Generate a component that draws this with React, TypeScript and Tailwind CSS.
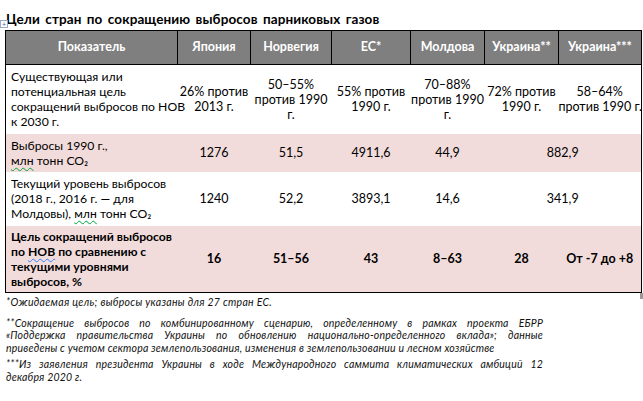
import React from "react";

const Wavy = ({ children, color = "decoration-green-600" }: { children: React.ReactNode; color?: string }) => (
  <span className={`underline decoration-wavy ${color} decoration-1 underline-offset-2`}>{children}</span>
);

const JLine = ({ children }: { children: React.ReactNode }) => (
  <div className="text-justify [text-align-last:justify] whitespace-nowrap">{children}</div>
);

export default function App() {
  const font = { fontFamily: "Lato, 'Open Sans', sans-serif" };
  const th = "border border-black bg-[#7f7f7f] text-white font-bold text-[12.5px] text-center align-middle";
  const td = "text-[12.5px] text-center align-middle leading-[15px]";
  const first = "text-[12.2px] leading-[15px] align-middle pl-[5px] whitespace-nowrap";
  return (
    <div className="w-[643px] h-[401px] bg-white relative text-black" style={font}>
      <div className="absolute left-0 top-[20px] w-[8px] h-[8px] border border-[#9aa9c4] bg-white text-[7px] leading-[6px] text-[#3c64b4] flex items-center justify-center">+</div>
      <div className="pl-[6px] pt-[9px] h-[30px] text-[13.5px] font-bold tracking-[0.1px] [word-spacing:2px]">
        Цели стран по сокращению выбросов парниковых газов
      </div>
      <table className="ml-[5px] border-collapse table-fixed w-[636px] border border-black">
        <colgroup>
          <col className="w-[172px]" />
          <col className="w-[73px]" />
          <col className="w-[81px]" />
          <col className="w-[79px]" />
          <col className="w-[74px]" />
          <col className="w-[74px]" />
          <col className="w-[83px]" />
        </colgroup>
        <thead>
          <tr className="h-[34px]">
            <th className={th}>Показатель</th>
            <th className={th}>Япония</th>
            <th className={th}>Норвегия</th>
            <th className={th}>ЕС*</th>
            <th className={th}>Молдова</th>
            <th className={th}>Украина**</th>
            <th className={th}>Украина***</th>
          </tr>
        </thead>
        <tbody>
          <tr className="h-[69px]">
            <td className={first}>
              Существующая или<br />потенциальная цель<br />сокращений выбросов по НОВ<br />к 2030 г.
            </td>
            <td className={td}>26% против<br />2013 г.</td>
            <td className={td}>50–55%<br />против 1990<br />г.</td>
            <td className={td}>55% против<br />1990 г.</td>
            <td className={td}>70–88%<br />против 1990<br />г.</td>
            <td className={td}>72% против<br />1990 г.</td>
            <td className={td}>58–64%<br /><span className="whitespace-nowrap">против 1990 г.</span></td>
          </tr>
          <tr className="h-[38px] bg-[#f2dcdb]">
            <td className={first}>
              Выбросы 1990 г.,<br /><Wavy>млн</Wavy> тонн CO₂
            </td>
            <td className={td}>1276</td>
            <td className={td}>51,5</td>
            <td className={td}>4911,6</td>
            <td className={td}>44,9</td>
            <td className={td} colSpan={2}>882,9</td>
          </tr>
          <tr className="h-[54px]">
            <td className={first}>
              Текущий уровень выбросов<br />(2018 г., 2016 г. — для<br />Молдовы), <Wavy>млн</Wavy> тонн CO₂
            </td>
            <td className={td}>1240</td>
            <td className={td}>52,2</td>
            <td className={td}>3893,1</td>
            <td className={td}>14,6</td>
            <td className={td} colSpan={2}>341,9</td>
          </tr>
          <tr className="h-[67px] bg-[#f2dcdb] font-bold">
            <td className={first}>
              Цель сокращений выбросов<br />по <Wavy color="decoration-blue-500">НОВ</Wavy> по сравнению с<br />текущими уровнями<br />выбросов, %
            </td>
            <td className={td}>16</td>
            <td className={td}>51–56</td>
            <td className={td}>43</td>
            <td className={td}>8–63</td>
            <td className={td}>28</td>
            <td className={td}>От -7 до +8</td>
          </tr>
        </tbody>
      </table>
      <div className="absolute left-[640px] top-[293px] w-[3px] h-[6px] bg-[#9a9a9a]" />
      <div className="w-[537px] ml-[6px] mt-[3px] italic text-[10.5px] leading-[12.5px] text-[#111]">
        <p className="mb-[8px] tracking-[0.3px]">*Ожидаемая цель; выбросы указаны для 27 стран ЕС.</p>
        <div className="mb-[4px] tracking-[0.2px]">
          <JLine>**Сокращение выбросов по комбинированному сценарию, определенному в рамках проекта ЕБРР</JLine>
          <JLine>«Поддержка правительства Украины по обновлению национально-определенного вклада»; данные</JLine>
          <div className="whitespace-nowrap">приведены с учетом сектора землепользования, изменения в землепользовании и лесном хозяйстве</div>
        </div>
        <div className="tracking-[0.2px]">
          <JLine>***Из заявления президента Украины в ходе Международного саммита климатических амбиций 12</JLine>
          <div>декабря 2020 г.</div>
        </div>
      </div>
    </div>
  );
}
